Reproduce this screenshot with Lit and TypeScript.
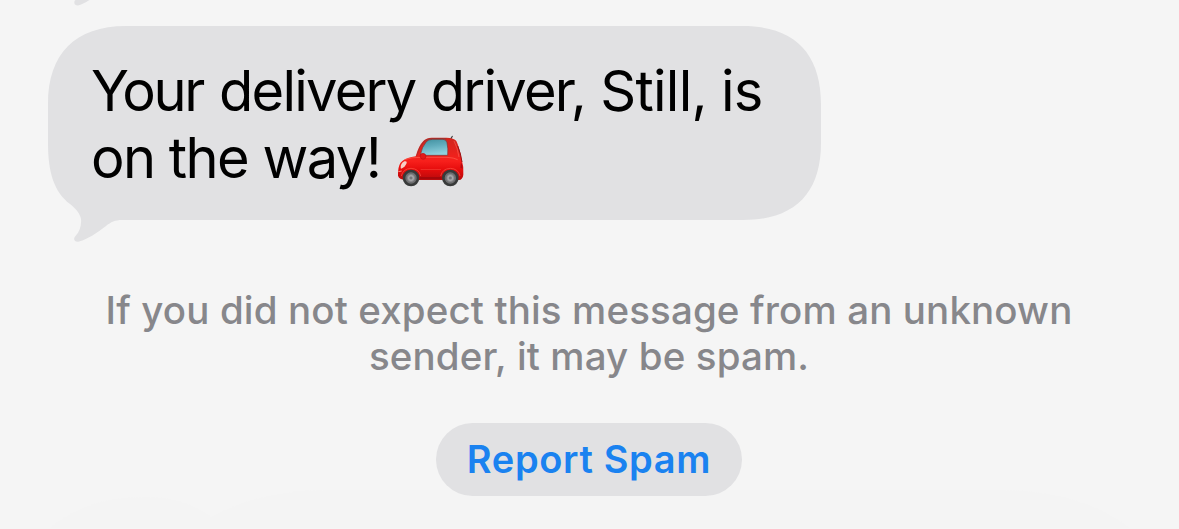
import { LitElement, html, svg, css } from "lit";
import { customElement } from "lit/decorators.js";

@customElement("car-emoji")
class CarEmoji extends LitElement {
  static styles = css`
    :host { display: block; flex: none; width: 70px; height: 54px; }
    .car { display: block; width: 100%; height: 100%; }
  `;
  render() {
    return html`
      <svg class="car" viewBox="33 26 210 162" role="img" aria-label="car">
        <defs>
          <linearGradient id="body" x1="0" y1="0" x2="0" y2="1">
            <stop offset="0" stop-color="#d0271f" />
            <stop offset="0.35" stop-color="#e8221c" />
            <stop offset="0.55" stop-color="#f8201c" />
            <stop offset="0.75" stop-color="#e60d0d" />
            <stop offset="1" stop-color="#b80a0c" />
          </linearGradient>
          <linearGradient id="glass" x1="0" y1="0" x2="0.25" y2="1">
            <stop offset="0" stop-color="#3f8f9e" />
            <stop offset="0.5" stop-color="#62adbd" />
            <stop offset="1" stop-color="#8fd0dc" />
          </linearGradient>
          <radialGradient id="rim">
            <stop offset="0" stop-color="#77777a" />
            <stop offset="0.5" stop-color="#aaaaad" />
            <stop offset="1" stop-color="#68686b" />
          </radialGradient>
        </defs>
        <path d="M194 43 L199 34 Q203 29 204 32 L198 44Z" fill="#3c3a3c" />
        <path d="M39 141 Q40 116 52 107 Q66 96 92 93 Q101 61 115 47 Q123 38 140 37 L184 37 Q208 38 214 47 Q223 65 230 102 Q237 126 235 148 Q233 163 222 164 L61 164 Q42 162 39 151Z" fill="url(#body)" />
        <path d="M95 92 Q103 62 117 48 Q125 40 140 40 L184 40" fill="none" stroke="#87383a" stroke-width="2" />
        <path d="M106 90 Q110 65 124 49 Q130 42 143 42 L174 42 Q183 42 186 52 Q190 70 188 90Z" fill="url(#glass)" stroke="#81322f" stroke-width="2" />
        <path d="M218 62 Q228 86 231 110" fill="none" stroke="#991316" stroke-width="3" />
        <path d="M207 47 Q218 67 222 95" fill="none" stroke="#ff7464" stroke-width="2" opacity="0.75" />
        <path d="M59 103 Q78 95 109 96 L186 96 Q207 97 218 103" fill="none" stroke="#ff6958" stroke-width="3" opacity="0.6" />
        <path d="M107 132 L168 132" stroke="#ff6050" stroke-width="2" opacity="0.7" />
        <path d="M104 158 L170 158" stroke="#a1080b" stroke-width="5" />
        <path d="M105 92 Q105 84 114 84 Q123 85 123 93 Q123 102 114 102 Q106 101 105 92Z" fill="#e21a18" stroke="#b30d10" stroke-width="1.5" />
        <path d="M47 128 Q46 114 58 108 Q67 106 65 113 Q61 125 48 130Z" fill="#f7cfc6" />
        <path d="M40 139 L50 137" stroke="#ff8c80" stroke-width="3" />
        <path d="M228 111 Q233 119 233 130 L226 127Z" fill="#b00c12" />
        <path d="M49 152 Q54 130 78 129 Q102 130 107 152" fill="none" stroke="#ff5548" stroke-width="2" />
        <path d="M167 152 Q172 130 196 129 Q220 130 225 152" fill="none" stroke="#ff5548" stroke-width="2" />
        ${[78, 196].map((x) => this.wheel(x))}
      </svg>`;
  }
  wheel(x: number) {
    return svg`
      <circle cx=${x} cy="158" r="25" fill="#383a3a" />
      <circle cx=${x} cy="158" r="17" fill="#707173" />
      <circle cx=${x} cy="158" r="14" fill="url(#rim)" />
      <circle cx=${x} cy="158" r="4" fill="#77777a" />`;
  }
}

@customElement("app-root")
class AppRoot extends LitElement {
  static styles = css`
    :host {
      display: flex;
      flex-direction: column;
      width: 1179px;
      height: 529px;
      overflow: hidden;
      background: #f5f5f5;
      font-family: Inter, "Liberation Sans", sans-serif;
    }
    .previous { display: block; height: 26px; width: 140px; flex: none; }
    .message { display: grid; flex: none; width: 821px; height: 216px; }
    .message > * { grid-area: 1 / 1; }
    .shape { display: block; width: 821px; height: 216px; }
    .copy { padding: 32px 0 0 91px; font-size: 56px; line-height: 66.5px; letter-spacing: -1.43px; color: #000; white-space: nowrap; }
    .line { display: flex; height: 66.5px; }
    .your { letter-spacing: -2.4px; margin-right: 1.8px; }
    .delivery { letter-spacing: -1.75px; margin-right: 0.9px; }
    .driver { letter-spacing: -1.75px; margin-right: 0.9px; }
    .still { letter-spacing: -0.75px; margin-right: -0.3px; }
    .is { letter-spacing: -0.6px; }
    .lead { width: 305px; letter-spacing: -1.55px; }
    car-emoji { margin-top: 9px; }
    .notice { flex: none; margin-top: 45px; width: 1178px; height: 92px; text-align: center; font-size: 38.5px; line-height: 46px; font-weight: 500; letter-spacing: 0.13px; color: #87878b; white-space: nowrap; }
    .footer { flex: 1; display: grid; width: 1179px; }
    .footer > * { grid-area: 1 / 1; }
    .bar { display: block; width: 1179px; height: 149px; }
    .report { justify-self: center; align-self: start; margin: 44px 1px 0 0; width: 306px; height: 73px; padding: 0; border: 0; border-radius: 36.5px; background: #e1e1e3; color: #1a82f0; font: 600 38px/73px Inter, "Liberation Sans", sans-serif; letter-spacing: 0.65px; white-space: nowrap; }
  `;
  render() {
    return html`
      <svg class="previous" viewBox="0 0 140 26"><path d="M78 -3 L74.5 1 Q73.5 5.5 78 5.5 Q84 4 94 -3Z" fill="#e1e1e3" /></svg>
      <div class="message">
        <svg class="shape" viewBox="0 26 821 216">
          <path d="M126 26 H743 C795 26 821 54 821 104 V143 C821 193 795 220 743 220 H122 C115 220 111 222 106 226 C97 233 88 239 79 241.5 C75 242.5 72.500 239.500 75.500 236 C80 231 81.500 225 81 219 C80 213 75 208 70 204 C54 192 48 172 48 143 V104 C48 54 75 26 126 26Z" fill="#e1e1e3" />
        </svg>
        <div class="copy">
          <div class="line"><span><span class="your">Your</span> <span class="delivery">delivery</span> <span class="driver">driver,</span> <span class="still">Still,</span> <span class="is">is</span></span></div>
          <div class="line"><span class="lead">on the way!</span><car-emoji></car-emoji></div>
        </div>
      </div>
      <div class="notice">
        <div>If you did not expect this message from an unknown</div>
        <div>sender, it may be spam.</div>
      </div>
      <div class="footer">
        <svg class="bar" viewBox="0 380 1179 149">
          <path d="M50 529 Q86 498 145 498 Q184 498 212 518 Q258 491 330 491 H1000 Q1080 491 1130 529Z" fill="#f4f4f4" />
        </svg>
        <button class="report">Report Spam</button>
      </div>`;
  }
}
